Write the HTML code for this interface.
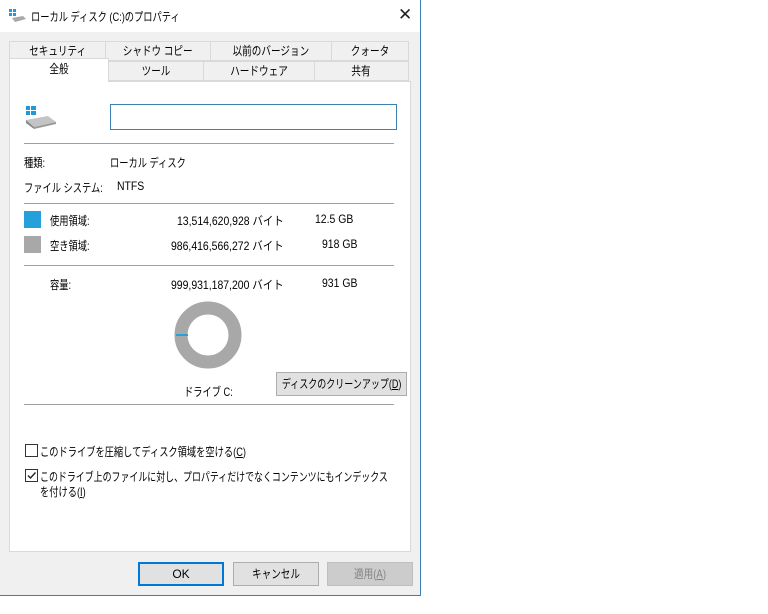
<!DOCTYPE html>
<html><head><meta charset="utf-8"><style>
*{margin:0;padding:0;box-sizing:border-box}
body{width:768px;height:614px;background:#fff;position:relative;overflow:hidden;font-family:"Liberation Sans","Noto Sans CJK JP",sans-serif;font-size:12px;color:#000}
.a{position:absolute;white-space:nowrap}
.s{transform:scaleX(.77);transform-origin:0 50%}
.n{transform:scaleX(.87);transform-origin:0 50%}
.cs{display:inline-block;transform:scaleX(.8);transform-origin:50% 50%;white-space:nowrap;margin:0 -40px}
#win{position:absolute;left:0;top:0;width:421px;height:596px;background:#f0f0f0;border-right:1px solid #3c7fb1;border-bottom:1px solid #3c7fb1}
#title{position:absolute;left:0;top:0;width:420px;height:32px;background:#fff}
.tab{position:absolute;height:20px;background:#f0f0f0;border:1px solid #d9d9d9;text-align:center;line-height:18px;white-space:nowrap}
.sep{position:absolute;height:1px;background:#a0a0a0;left:24px;width:370px}
.btn{position:absolute;height:24px;background:#e1e1e1;border:1px solid #adadad;text-align:center;line-height:22px;white-space:nowrap}
.cb{position:absolute;width:13px;height:13px;border:1px solid #333;background:#fff}
</style></head><body>
<div id="win">
<div id="title">
<svg class="a" style="left:9px;top:9px" width="18" height="14"><rect x="0" y="0" width="3" height="3" fill="#1e9ad6"/><rect x="4" y="0" width="3" height="3" fill="#1e9ad6"/><rect x="0" y="4" width="3" height="3" fill="#1e9ad6"/><rect x="4" y="4" width="3" height="3" fill="#1e9ad6"/><path d="M3 9 L14 7 L17 10 L6 13Z" fill="#a9a9a9"/></svg>
<div class="a s" style="left:31px;top:8px">ローカル ディスク (C:)のプロパティ</div>
<div class="a" style="left:398px;top:5px;font-size:17px;color:#222">✕</div>
</div>
<div class="a" style="left:9px;top:81px;width:402px;height:471px;background:#fff;border:1px solid #d9d9d9"></div>
<div class="tab" style="left:9px;top:41px;width:97px"><span class="cs">セキュリティ</span></div>
<div class="tab" style="left:105px;top:41px;width:106px"><span class="cs">シャドウ コピー</span></div>
<div class="tab" style="left:210px;top:41px;width:122px"><span class="cs">以前のバージョン</span></div>
<div class="tab" style="left:331px;top:41px;width:78px"><span class="cs">クォータ</span></div>
<div class="tab" style="left:108px;top:61px;width:96px"><span class="cs">ツール</span></div>
<div class="tab" style="left:203px;top:61px;width:112px"><span class="cs">ハードウェア</span></div>
<div class="tab" style="left:314px;top:61px;width:95px"><span class="cs">共有</span></div>
<div class="tab" style="left:9px;top:58px;width:100px;height:24px;background:#fff;border-bottom:none;line-height:20px"><span class="cs">全般</span></div>
<svg class="a" style="left:24px;top:106px" width="34" height="24"><rect x="2" y="0" width="4" height="4" fill="#1e9ad6"/><rect x="7" y="0" width="5" height="4" fill="#1e9ad6"/><rect x="2" y="5" width="4" height="4" fill="#1e9ad6"/><rect x="7" y="5" width="5" height="4" fill="#1e9ad6"/><path d="M2 14 L24 10 L32 16 L10 21Z" fill="#c4c4c4"/><path d="M2 14 L10 21 L10 23 L2 17Z" fill="#888"/><path d="M10 21 L32 16 L32 18 L10 23Z" fill="#9a9a9a"/></svg>
<div class="a" style="left:110px;top:104px;width:287px;height:26px;border:1px solid #3c7fb1;background:#fff"></div>
<div class="sep" style="top:143px"></div>
<div class="a s" style="left:24px;top:154px">種類:</div><div class="a s" style="left:110px;top:154px">ローカル ディスク</div>
<div class="a s" style="left:24px;top:179px">ファイル システム:</div><div class="a n" style="left:117px;top:179px">NTFS</div>
<div class="sep" style="top:203px"></div>
<div class="a" style="left:24px;top:211px;width:17px;height:17px;background:#26a0da"></div>
<div class="a s" style="left:50px;top:212px">使用領域:</div><div class="a n" style="left:177px;top:212px">13,514,620,928 バイト</div><div class="a n" style="left:315px;top:212px">12.5 GB</div>
<div class="a" style="left:24px;top:236px;width:17px;height:17px;background:#a8a8a8"></div>
<div class="a s" style="left:50px;top:237px">空き領域:</div><div class="a n" style="left:171px;top:237px">986,416,566,272 バイト</div><div class="a n" style="left:322px;top:237px">918 GB</div>
<div class="sep" style="top:265px"></div>
<div class="a s" style="left:50px;top:276px">容量:</div><div class="a n" style="left:171px;top:276px">999,931,187,200 バイト</div><div class="a n" style="left:322px;top:276px">931 GB</div>
<svg class="a" style="left:174px;top:301px" width="68" height="68"><circle cx="34" cy="34" r="27" fill="none" stroke="#a8a8a8" stroke-width="13"/><line x1="2" y1="34" x2="14" y2="34" stroke="#26a0da" stroke-width="2"/></svg>
<div class="a s" style="left:184px;top:383px">ドライブ C:</div>
<div class="btn" style="left:276px;top:372px;width:131px"><span class="cs" style="transform:scaleX(.75)">ディスクのクリーンアップ(<u>D</u>)</span></div>
<div class="sep" style="top:404px"></div>
<div class="cb" style="left:25px;top:444px"></div>
<div class="a s" style="left:40px;top:443px">このドライブを圧縮してディスク領域を空ける(<u>C</u>)</div>
<div class="cb" style="left:25px;top:469px"></div>
<svg class="a" style="left:26px;top:470px" width="11" height="11"><path d="M2 5.5 L4.5 8 L9.5 2.5" fill="none" stroke="#222" stroke-width="1.4"/></svg>
<div class="a s" style="left:40px;top:468px;transform:scaleX(.745)">このドライブ上のファイルに対し、プロパティだけでなくコンテンツにもインデックス</div>
<div class="a s" style="left:40px;top:483px">を付ける(<u>I</u>)</div>
<div class="btn" style="left:138px;top:562px;width:86px;border:2px solid #0078d7;line-height:20px">OK</div>
<div class="btn" style="left:233px;top:562px;width:86px"><span class="cs">キャンセル</span></div>
<div class="btn" style="left:327px;top:562px;width:86px;background:#cccccc;border-color:#bfbfbf;color:#838383"><span class="cs">適用(<u>A</u>)</span></div>
</div>
</body></html>
